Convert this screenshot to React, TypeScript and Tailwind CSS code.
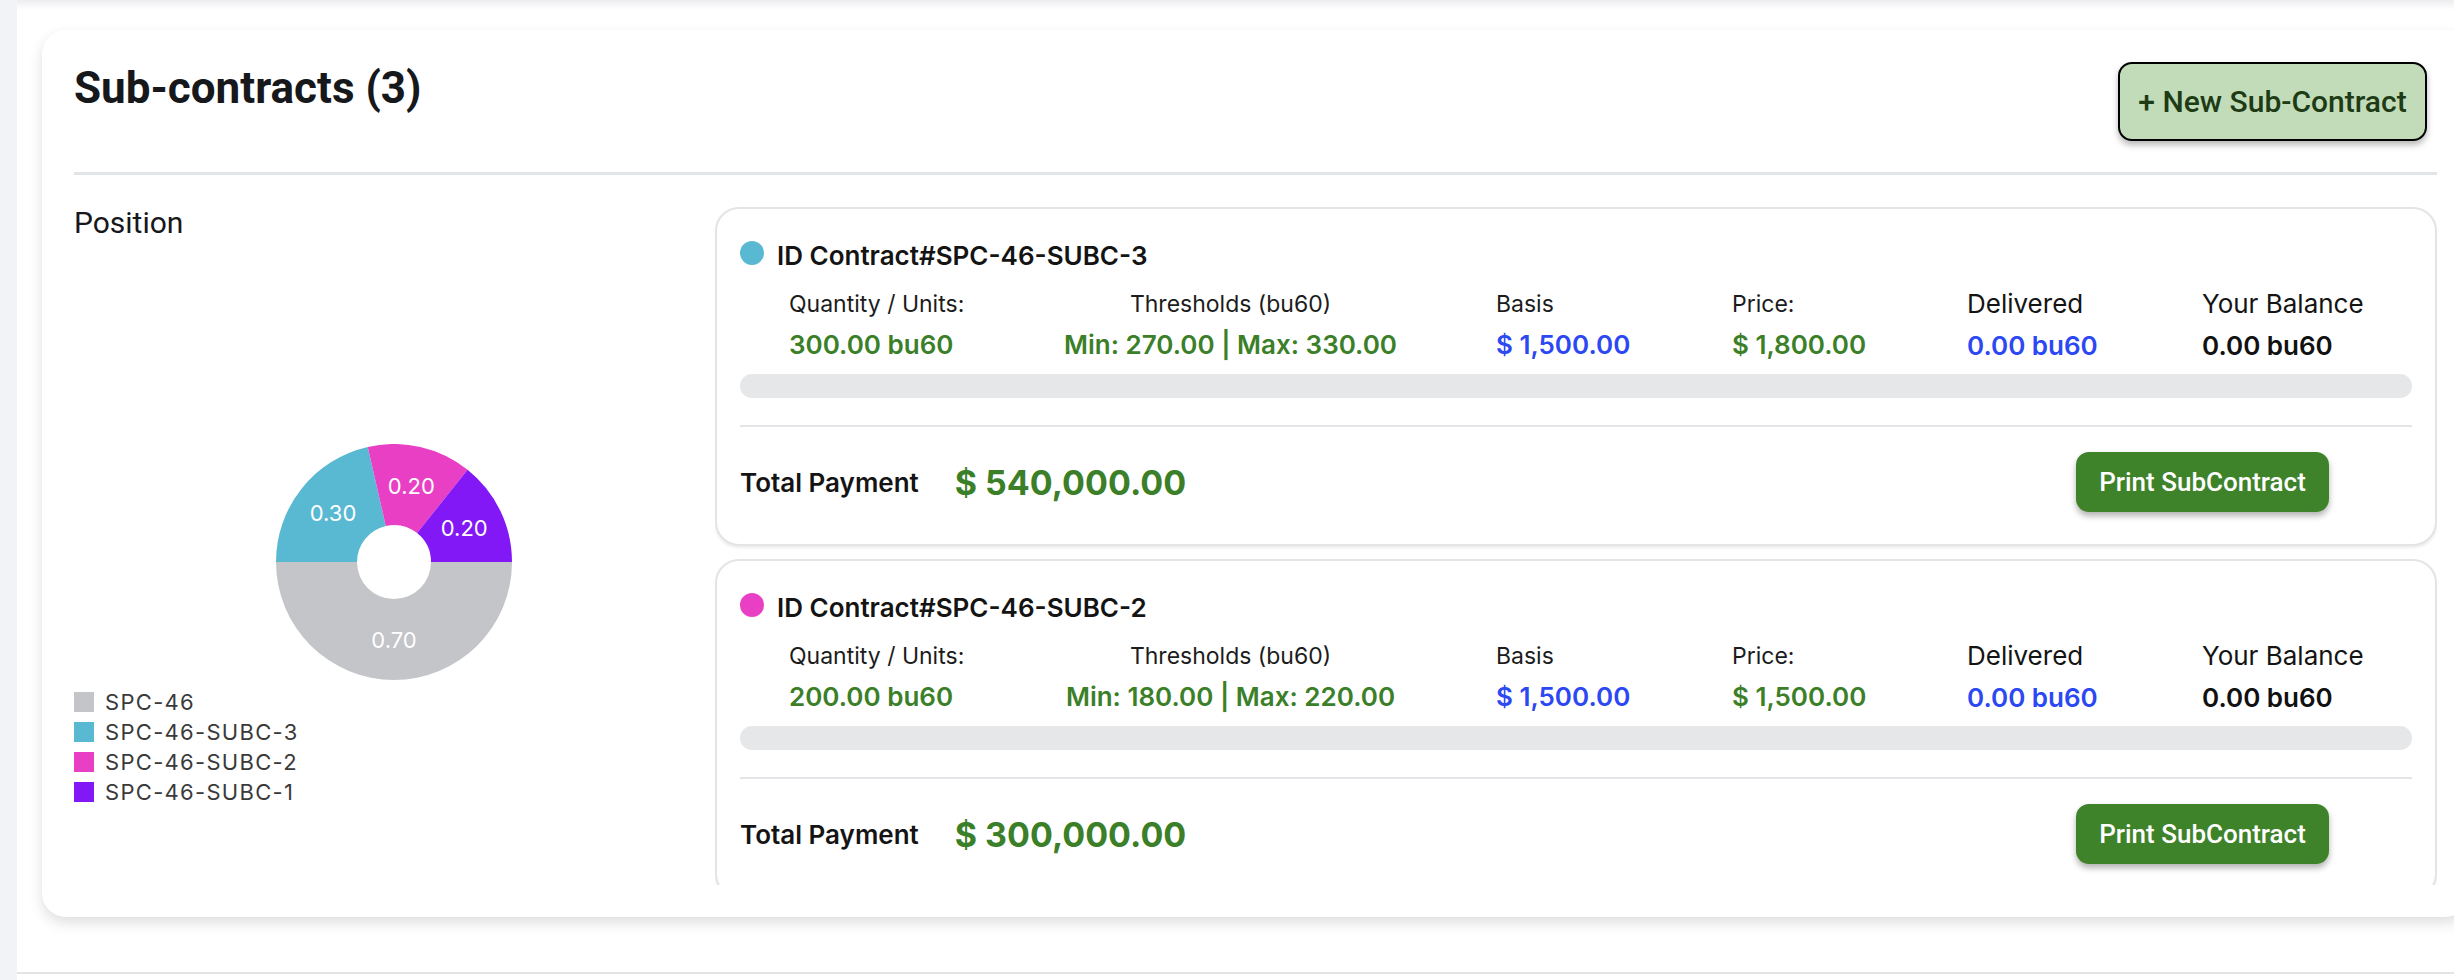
import React from "react";

type Slice = { label: string; value: number; color: string; swatch: string };

const slices: Slice[] = [
  { label: "SPC-46", value: 0.7, color: "#c3c5c8", swatch: "bg-[#c3c5c8]" },
  { label: "SPC-46-SUBC-3", value: 0.3, color: "#59b9d2", swatch: "bg-[#59b9d2]" },
  { label: "SPC-46-SUBC-2", value: 0.2, color: "#e93fc4", swatch: "bg-[#e93fc4]" },
  { label: "SPC-46-SUBC-1", value: 0.2, color: "#8118f5", swatch: "bg-[#8118f5]" },
];

type SubContract = {
  id: string;
  dot: string;
  qty: string;
  thresholds: string;
  basis: string;
  price: string;
  delivered: string;
  balance: string;
  total: string;
};

// only the two visible in the scroll box
const subContracts: SubContract[] = [
  {
    id: "SPC-46-SUBC-3",
    dot: "bg-[#59b9d2]",
    qty: "300.00 bu60",
    thresholds: "Min: 270.00 | Max: 330.00",
    basis: "$ 1,500.00",
    price: "$ 1,800.00",
    delivered: "0.00 bu60",
    balance: "0.00 bu60",
    total: "$ 540,000.00",
  },
  {
    id: "SPC-46-SUBC-2",
    dot: "bg-[#e93fc4]",
    qty: "200.00 bu60",
    thresholds: "Min: 180.00 | Max: 220.00",
    basis: "$ 1,500.00",
    price: "$ 1,500.00",
    delivered: "0.00 bu60",
    balance: "0.00 bu60",
    total: "$ 300,000.00",
  },
];

function Donut() {
  const cx = 320;
  const cy = 118;
  const R = 118;
  const r = 37;
  const total = slices.reduce((s, x) => s + x.value, 0);
  const pt = (rad: number, a: number) => `${cx + rad * Math.cos(a)} ${cy + rad * Math.sin(a)}`;

  let start = 0;
  const arcs = slices.map((s) => {
    const a0 = start;
    const a1 = a0 + (s.value / total) * Math.PI * 2;
    start = a1;
    const large = a1 - a0 > Math.PI + 0.0001 ? 1 : 0;
    const d = `M ${pt(R, a0)} A ${R} ${R} 0 ${large} 1 ${pt(R, a1)} L ${pt(r, a1)} A ${r} ${r} 0 ${large} 0 ${pt(r, a0)} Z`;
    const mid = (a0 + a1) / 2;
    return { d, color: s.color, value: s.value, lx: cx + 78 * Math.cos(mid), ly: cy + 78 * Math.sin(mid) };
  });

  return (
    <svg width={641} height={236} viewBox="0 0 641 236">
      {arcs.map((a, i) => (
        <path key={i} d={a.d} fill={a.color} />
      ))}
      {arcs.map((a, i) => (
        <text
          key={"t" + i}
          x={a.lx}
          y={a.ly}
          fill="#ffffff"
          fontSize={22}
          fontFamily="Inter, sans-serif"
          textAnchor="middle"
          dominantBaseline="central"
        >
          {a.value.toFixed(2)}
        </text>
      ))}
    </svg>
  );
}

function SubCard({ c }: { c: SubContract }) {
  return (
    <div className="shrink-0 rounded-[24px] border-2 border-[#e4e4e4] bg-white px-[23px] pt-[31px] pb-[32px] shadow-[0_2px_3px_rgba(0,0,0,0.08)]">
      {/* header */}
      <div className="flex h-[32px] items-center gap-[13px]">
        <span className={`mb-[6px] h-[24px] w-[24px] shrink-0 rounded-full ${c.dot}`} />
        <span className="text-[26px] font-semibold leading-[32px] text-[#141414]">ID Contract#{c.id}</span>
      </div>

      {/* figures */}
      <div className="mt-[18px] flex pl-[49px]">
        <div className="flex w-[274px] flex-col">
          <span className="text-[23px] leading-[28px] text-[#1c1c1c]">Quantity / Units:</span>
          <span className="mt-[11px] text-[26px] font-semibold leading-[32px] text-[#3c7f29]">{c.qty}</span>
        </div>
        <div className="flex w-[335px] flex-col items-center">
          <span className="text-[23px] leading-[28px] text-[#1c1c1c]">Thresholds (bu60)</span>
          <span className="mt-[11px] whitespace-nowrap text-[26px] font-semibold leading-[32px] text-[#3c7f29]">{c.thresholds}</span>
        </div>
        <div className="ml-[98px] flex w-[236px] flex-col">
          <span className="text-[23px] leading-[28px] text-[#1c1c1c]">Basis</span>
          <span className="mt-[11px] text-[26px] font-semibold leading-[32px] text-[#2c48f3]">{c.basis}</span>
        </div>
        <div className="flex w-[235px] flex-col">
          <span className="text-[23px] leading-[28px] text-[#1c1c1c]">Price:</span>
          <span className="mt-[11px] text-[26px] font-semibold leading-[32px] text-[#3c7f29]">{c.price}</span>
        </div>
        <div className="flex w-[235px] flex-col">
          <span className="text-[26px] leading-[28px] text-[#141414]">Delivered</span>
          <span className="mt-[12px] text-[26px] font-semibold leading-[32px] text-[#2c48f3]">{c.delivered}</span>
        </div>
        <div className="flex flex-1 flex-col">
          <span className="text-[26px] leading-[28px] text-[#141414]">Your Balance</span>
          <span className="mt-[12px] text-[26px] font-semibold leading-[32px] text-[#111111]">{c.balance}</span>
        </div>
      </div>

      <div className="mt-[12px] h-[24px] rounded-full bg-[#e6e7e9]" />
      <div className="mt-[27px] h-[2px] bg-[#e3e5e8]" />

      {/* footer */}
      <div className="mt-[25px] flex h-[60px] items-center justify-between">
        <div className="flex items-center">
          <span className="text-[26px] font-semibold text-[#141414]">Total Payment</span>
          <span className="ml-[36px] text-[34px] font-bold text-[#3c7f29]">{c.total}</span>
        </div>
        <button className="mr-[83px] h-[60px] w-[253px] rounded-[13px] bg-[#3e8229] font-['Roboto',sans-serif] text-[26px] font-medium text-white shadow-[0_4px_6px_rgba(0,0,0,0.3)]">
          Print SubContract
        </button>
      </div>
    </div>
  );
}

export default function App() {
  return (
    <div className="flex h-[980px] w-[2454px] overflow-hidden bg-white font-['Inter',sans-serif]">
      <div className="w-[17px] shrink-0 bg-[#f2f3f7]" />

      <div className="flex min-w-0 flex-1 flex-col">
        <div className="h-[10px] shrink-0 bg-gradient-to-b from-[#ededf0] to-white" />

        <div className="ml-[25px] mt-[20px] flex h-[887px] w-[2427px] shrink-0 flex-col rounded-[24px] bg-white px-[32px] pt-[32px] shadow-[0_6px_14px_rgba(0,0,0,0.13)]">
          {/* title row */}
          <div className="flex items-start justify-between font-['Roboto',sans-serif]">
            <h2 className="text-[44px] font-bold leading-[52px] text-[#16181c]">Sub-contracts (3)</h2>
            <button className="mr-[10px] h-[79px] w-[309px] rounded-[14px] border-2 border-black bg-[#c2dcba] text-[30px] font-medium text-[#1d3b14] shadow-[0_4px_6px_rgba(0,0,0,0.28)]">
              + New Sub-Contract
            </button>
          </div>

          <div className="mt-[31px] h-[3px] shrink-0 bg-[#e1e4e9]" />

          <div className="flex min-h-0 flex-1">
            {/* position chart */}
            <div className="flex w-[641px] shrink-0 flex-col pt-[30px]">
              <span className="font-['Roboto',sans-serif] text-[30px] font-normal leading-[36px] text-[#16181c]">Position</span>
              <div className="mt-[203px]">
                <Donut />
              </div>
              <div className="mt-[12px] flex flex-col gap-[10px]">
                {slices.map((s) => (
                  <div key={s.label} className="flex h-[20px] items-center gap-[11px]">
                    <span className={`h-[20px] w-[20px] ${s.swatch}`} />
                    <span className="text-[22px] leading-[20px] tracking-[1.3px] text-[#3a3a3a]">{s.label}</span>
                  </div>
                ))}
              </div>
            </div>

            {/* sub-contract list */}
            <div className="min-w-0 flex-1 pt-[32px]">
              <div className="flex h-[678px] flex-col gap-[13px] overflow-hidden">
                {subContracts.map((c) => (
                  <SubCard key={c.id} c={c} />
                ))}
              </div>
            </div>
          </div>
        </div>

        <div className="mt-[55px] h-[2px] shrink-0 bg-[#e4e4e6]" />
      </div>
    </div>
  );
}
